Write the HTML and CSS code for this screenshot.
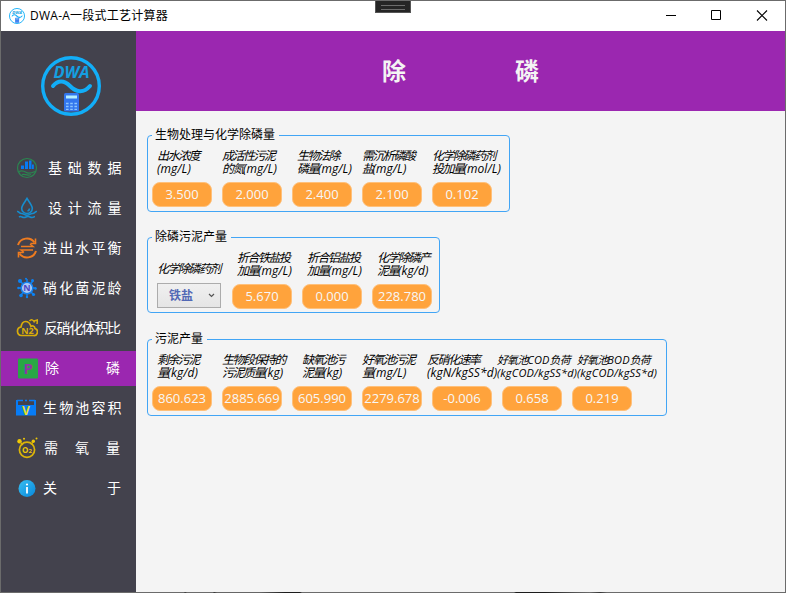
FILE: index.html
```html
<!DOCTYPE html>
<html lang="zh-CN">
<head>
<meta charset="utf-8">
<title>DWA-A一段式工艺计算器</title>
<link rel="stylesheet" href="styles.css">
</head>
<body>
<svg width="0" height="0" class="defs">
  <symbol id="logo" viewBox="0 0 60 60">
    <circle cx="30" cy="30" r="28.3" fill="none" stroke="#12aef8" stroke-width="3.4"/>
    <text x="12.5" y="22" class="logo-text" textLength="36" lengthAdjust="spacingAndGlyphs">DWA</text>
    <path d="M12 30C17 24 23 24 29 30S42 38 49 30" fill="none" stroke="#12aef8" stroke-width="4" stroke-linecap="round"/>
    <rect x="23" y="37" width="15" height="18.5" rx="1.5" fill="#3276ee"/>
    <rect x="25" y="39.5" width="11" height="3" fill="#b5efff"/>
    <path d="M25 47.5h11M25 50.5h11M25 53.3h11" stroke="#8cc5ff" stroke-width="1.3" stroke-dasharray="2.6 1.6"/>
  </symbol>
</svg>
<div class="window">
  <header class="titlebar">
    <svg class="app-icon"><use href="#logo"/></svg>
    <span class="app-title">DWA-A一段式工艺计算器</span>
    <div class="grip"></div>
    <svg class="controls" width="138" height="30" viewBox="0 0 138 30" fill="none" stroke="#000">
      <path d="M19 14.5h10M64.5 9.5h9v9h-9z"/><path d="M110 9.5l10 10M120 9.5l-10 10" stroke-width="1.1"/>
    </svg>
  </header>
  <div class="body">
    <nav class="sidebar">
      <svg class="logo"><use href="#logo"/></svg>
      <a class="item"><svg class="icon" viewBox="0 0 22 22"><circle cx="11" cy="11" r="9.5" fill="none" stroke="#2b8650" stroke-width="1.2"/><path d="M5 8.500h3v3.500H5zM9 4.500h3V12H9zM13 3.500h2.500V12H13zM16 7.500h1.800V12H16z" fill="#087bf4"/><path d="M3 14.500c3-1.500 5-.5 7 .8s5 1 9-.8M6 17.500c3-1 5 2 9 0" fill="none" stroke="#2b8650" stroke-width="1.300"/></svg><span class="name s4">基础数据</span></a>
      <a class="item"><svg class="icon" viewBox="0 0 22 22" fill="none" stroke="#168ccd" stroke-width="1.600"><path d="M11 1.500C9 5 5.700 8 5.700 11.500a5.300 5 0 0 0 10.600 0C16.300 8 13 5 11 1.500zM13.500 11.500a2.500 2.500 0 0 1-2 2.500"/><path d="M1 14.500c2-.5 2 2 4.500 2s3 1.800 5.500 1.800 3-1.800 5.500-1.800 2.500-2.500 4.500-2M3 20c2-1.500 3 .5 5 .5s2-1 4-1 2 1 4 1 2-1 3-1"/></svg><span class="name s4">设计流量</span></a>
      <a class="item"><svg class="icon" viewBox="0 0 22 22" fill="none" stroke="#ee7b20"><path d="M2 8a9.300 9.300 0 0 1 16.500-2.500M20 14a9.300 9.300 0 0 1-16.500 2.500" stroke-width="2"/><path d="M19.500 1.500v5h-5M2.500 20.500v-5h5" stroke-width="1.600"/><path d="M5 9.500h12l-3-2.500M17 13H5l3 2.500" stroke-width="1.500"/></svg><span class="name s5">进出水平衡</span></a>
      <a class="item"><svg class="icon" viewBox="0 0 22 22"><g stroke="#1180e9" stroke-width="1.500"><path d="M11 2v18M2 11h18M4.500 4.500l13 13M17 4L5 18"/></g><g fill="#0a82f5"><circle cx="4" cy="4" r="2"/><circle cx="16.500" cy="3.500" r="1.500"/><circle cx="2.500" cy="11" r="1.300"/><circle cx="19.500" cy="11.500" r="1.300"/><circle cx="17.500" cy="17.500" r="1.600"/><circle cx="5" cy="18.500" r="1.800"/><circle cx="11" cy="20" r="1.200"/><circle cx="10" cy="1.800" r="1"/></g><circle cx="11" cy="11" r="5.800" fill="#a9c9f3" stroke="#1680ed" stroke-width="1.500"/><text x="11" y="14.300" class="sym n">N</text></svg><span class="name s5">硝化菌泥龄</span></a>
      <a class="item"><svg class="icon" viewBox="0 0 22 22"><path d="M5.500 18.500h12a3.600 3.600 0 0 0 1.500-7c-.5-3-3-3-4-2C14 6 12 4.500 9.500 4.500S5.500 7 5 10c-5 1-4.500 8 .5 8.500z" fill="none" stroke="#d9ad0a" stroke-width="1.700"/><path d="M13.500 4c1.500-2 4-1.500 5 1.500M18 4l3.500-1-.5 4" fill="none" stroke="#d9ad0a" stroke-width="1.500"/><text x="11.500" y="16.500" class="sym cloud">N2</text></svg><span class="name s6">反硝化体积比</span></a>
      <a class="item active"><svg class="icon" viewBox="0 0 22 22"><rect x="2" y="1.500" width="20" height="20" rx="1" fill="#28a745"/><text x="12.200" y="17" class="sym p">P</text></svg><span class="name s2">除磷</span></a>
      <a class="item"><svg class="icon" viewBox="0 0 22 22"><path d="M0 3h2v5h16V3h2v15.500H0z" fill="#087cf5"/><path d="M1 3.500h6M9 3.500h2M13 3.500h6" stroke="#087cf5" stroke-width="1.300"/><text x="10" y="18" class="sym v">V</text></svg><span class="name s5">生物池容积</span></a>
      <a class="item"><svg class="icon" viewBox="0 0 22 22"><circle cx="11" cy="12.800" r="7.600" fill="none" stroke="#dbb409" stroke-width="1.700"/><g fill="#efc806"><circle cx="3.500" cy="4.200" r="2.200"/><circle cx="8" cy="1.800" r="1"/><circle cx="17.300" cy="4.300" r="1.700"/><circle cx="20.500" cy="1.500" r="1"/></g><path d="M4 5l3 3M17 5l-2 2.500" stroke="#dbb409" stroke-width="1.300"/><text x="11" y="15.800" class="sym o">O<tspan class="sub">2</tspan></text></svg><span class="name s3">需氧量</span></a>
      <a class="item"><svg class="icon" viewBox="0 0 22 22"><defs><linearGradient id="info" x2="1" y2="1"><stop stop-color="#39bff2"/><stop offset="1" stop-color="#0787da"/></linearGradient></defs><circle cx="11" cy="11.500" r="8.500" fill="url(#info)"/><circle cx="11" cy="7.500" r="1.100" fill="#fff"/><path d="M11 10v6.500" stroke="#fff" stroke-width="1.800"/></svg><span class="name s1">关于</span></a>
    </nav>
    <main class="main">
      <h1 class="banner"><span>除</span><span>磷</span></h1>
      <div class="content">
        <fieldset class="group g1">
          <legend>生物处理与化学除磷量</legend>
          <div class="fields">
            <div class="field"><div class="label i5">出水浓度<br><i>(mg/L)</i></div><output>3.500</output></div>
            <div class="field"><div class="label">成活性污泥<br>的氮<i>(mg/L)</i></div><output>2.000</output></div>
            <div class="field"><div class="label i5">生物法除<br>磷量<i>(mg/L)</i></div><output>2.400</output></div>
            <div class="field"><div class="label">需沉析磷酸<br>盐<i>(mg/L)</i></div><output>2.100</output></div>
            <div class="field"><div class="label">化学除磷药剂<br>投加量<i>(mol/L)</i></div><output>0.102</output></div>
          </div>
        </fieldset>
        <fieldset class="group g2">
          <legend>除磷污泥产量</legend>
          <div class="fields">
            <div class="field wide"><div class="label i5 single">化学除磷药剂</div><div class="combo"><span>铁盐</span><svg width="7" height="5" viewBox="0 0 7 5"><path d="M1 1l2.500 2.500L6 1" fill="none" stroke="#555" stroke-width="1.200"/></svg></div></div>
            <div class="field"><div class="label i5">折合铁盐投<br>加量<i>(mg/L)</i></div><output>5.670</output></div>
            <div class="field"><div class="label i5">折合铝盐投<br>加量<i>(mg/L)</i></div><output>0.000</output></div>
            <div class="field"><div class="label i5">化学除磷产<br>泥量<i>(kg/d)</i></div><output>228.780</output></div>
          </div>
        </fieldset>
        <fieldset class="group g3">
          <legend>污泥产量</legend>
          <div class="fields">
            <div class="field"><div class="label i5">剩余污泥<br>量<i>(kg/d)</i></div><output>860.623</output></div>
            <div class="field"><div class="label">生物段保持的<br>污泥质量<i>(kg)</i></div><output>2885.669</output></div>
            <div class="field"><div class="label i10">缺氧池污<br>泥量<i>(kg)</i></div><output>605.990</output></div>
            <div class="field"><div class="label">好氧池污泥<br>量<i>(mg/L)</i></div><output>2279.678</output></div>
            <div class="field"><div class="label out">反硝化速率<br><i>(kgN/kgSS*d)</i></div><output>-0.006</output></div>
            <div class="field"><div class="label small out">好氧池<i>COD</i>负荷<br><i>(kgCOD/kgSS*d)</i></div><output>0.658</output></div>
            <div class="field"><div class="label small i5">好氧池<i>BOD</i>负荷<br><i>(kgCOD/kgSS*d)</i></div><output>0.219</output></div>
          </div>
        </fieldset>
      </div>
    </main>
  </div>
  <div class="edge"></div>
</div>
</body>
</html>
```
FILE: styles.css
```css
* { box-sizing: border-box; }
body { margin: 0; font-family: "Open Sans", "Noto Sans CJK SC", sans-serif; font-size: 12px; color: #000; overflow: hidden; }
.defs { display: none; }
.window { position: relative; display: flex; flex-direction: column; width: 786px; height: 593px; border: 1px solid #6b6b6b; border-bottom: 0; background: #f4f4f4; }
.titlebar { display: flex; align-items: center; height: 30px; flex: none; background: #fff; }
.app-icon { width: 16px; height: 16px; margin: 0 5px 1px 8px; }
.app-title { line-height: 28px; white-space: nowrap; letter-spacing: 0.250px; }
.grip { position: absolute; left: 374px; top: 0; width: 36px; height: 12px; background: #252525; border: 1px solid #555; border-top: 0; }
.grip::before { content: ""; display: block; width: 24px; height: 3px; margin: 4px 5px; border: solid #6c6c6c; border-width: 1px 0; }
.controls { margin-left: auto; }
.body { display: flex; flex: 1; min-height: 0; }
.sidebar { width: 135px; flex: none; background: #43424d; }
.logo { display: block; width: 60px; height: 60px; margin: 25px auto 35px 40px; }
.logo-text { font: italic bold 16px "Open Sans", sans-serif; fill: #149fe1; }
.item { display: flex; align-items: center; height: 35px; margin-bottom: 5px; padding: 0 0 2px 15px; color: #fff; font-size: 14px; }
.active { background: #9b27b0; }
.icon { width: 22px; height: 22px; flex: none; }
.name { white-space: nowrap; line-height: 20px; }
.s4 { margin-left: 10px; letter-spacing: 5.800px; }
.s5 { margin-left: 5px; letter-spacing: 2.150px; }
.s6 { margin-left: 6px; letter-spacing: -1.400px; }
.s2 { margin-left: 7px; letter-spacing: 47px; }
.s3 { margin-left: 6px; letter-spacing: 17px; }
.s1 { margin-left: 5px; letter-spacing: 50px; }
.sym { font-family: "Open Sans", sans-serif; font-weight: bold; text-anchor: middle; }
.n { font-size: 9px; fill: #5146c4; }
.cloud { font-size: 9px; fill: #d9ad0a; }
.p { font-size: 15px; font-weight: 700; fill: #8f37a8; }
.v { font-size: 12px; fill: #e9df25; }
.o { font-size: 8px; fill: #efc806; }
.sub { font-size: 6px; }
.main { flex: 1; min-width: 0; }
.banner { display: flex; align-items: center; gap: 109px; height: 80px; margin: 0; padding-left: 246px; background: #9b27b0; color: #f4f4f4; font-size: 24px; line-height: 36px; }
.content { padding: 16px 0 0 11px; }
.group { margin: 0; padding: 5px 0 0 4px; border: 1px solid #42a5f5; border-radius: 4px; min-width: 0; }
.group legend { height: 17px; padding: 0 4px 0 3px; line-height: 16px; }
.g1 { width: 363px; height: 85px; margin-bottom: 17px; }
.g2 { width: 293px; height: 84px; margin-bottom: 18px; }
.g3 { width: 520px; height: 85px; }
.fields { display: flex; }
.field { width: 70px; flex: none; }
.wide { width: 80px; }
.label { height: 26px; margin-bottom: 7px; line-height: 13px; font-style: italic; white-space: nowrap; letter-spacing: -1.500px; }
.label i { letter-spacing: 0.070px; }
.small { font-size: 11px; letter-spacing: -0.900px; }
.small i { letter-spacing: 0.180px; }
.i5 { padding-left: 5px; }
.i10 { padding-left: 10px; }
.out { margin-left: -5px; }
.single { padding-top: 11px; }
output { display: block; width: 60px; height: 25px; border: 1px solid #ffc07a; border-radius: 8px; background: #ffa33c; color: #f7f7f7; font-size: 13px; line-height: 23px; text-align: center; white-space: nowrap; }
.combo { display: flex; align-items: center; justify-content: space-between; width: 64px; height: 25px; margin: -1px 0 0 5px; padding: 0 5px 0 11px; border: 1px solid #acacac; background: linear-gradient(#f0f0f0, #e5e5e5); color: #5268b5; font-weight: bold; line-height: 25px; }
.edge { position: absolute; left: -1px; right: -1px; bottom: 0; height: 1px; background: linear-gradient(90deg, #6b6b6b 184px, #333 185px, #6b6b6b 187px 213px, #333 214px, #666 217px 260px, #1c1c1c 285px 300px, #6b6b6b 302px 514px, #1c1c1c 516px 545px, #555 575px, #6b6b6b 590px, #333 600px, #6b6b6b 607px); }
```
